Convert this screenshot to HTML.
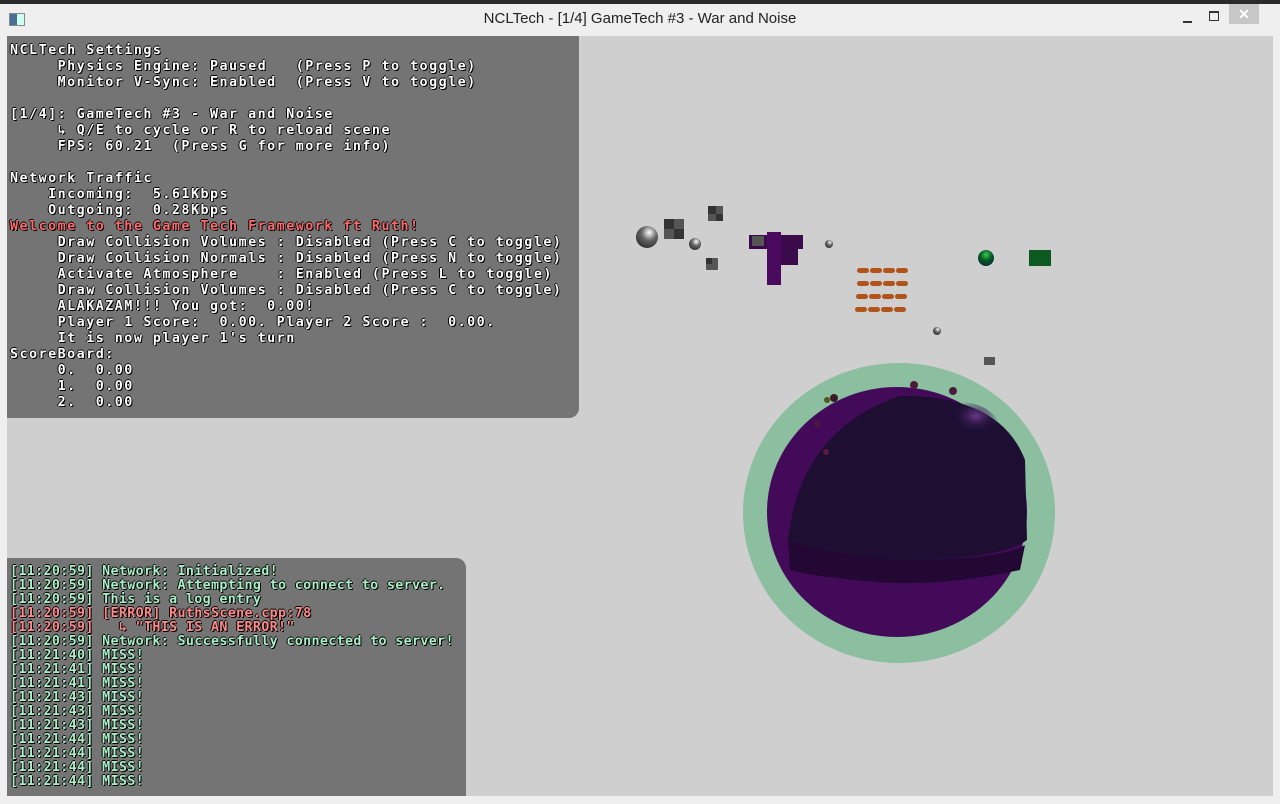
<!DOCTYPE html>
<html><head><meta charset="utf-8"><style>
html,body{margin:0;padding:0;width:1280px;height:804px;overflow:hidden;background:#cfcfcf;font-family:"Liberation Mono",monospace}
#top{position:absolute;left:0;top:0;width:1280px;height:4px;background:#2b2b2b}
#title{position:absolute;left:0;top:4px;width:1280px;height:32px;background:#efefef}
#title .t{position:absolute;left:0;width:1280px;top:6px;text-align:center;font:15px "Liberation Sans",sans-serif;color:#222}
#frameL{position:absolute;left:0;top:36px;width:7px;height:768px;background:#efefef}
#frameR{position:absolute;right:0;top:36px;width:7px;height:768px;background:#efefef}
#frameB{position:absolute;left:0;top:796px;width:1280px;height:8px;background:#efefef}
.p{position:absolute;background:#747474}
pre{margin:0;position:absolute;font-size:13.33px;font-weight:bold;color:#fff;text-shadow:1px 1px 0 #000,-1px 0 0 #000,0 -1px 0 #000}
.r{color:#ff6b6b}
.g{color:#a9f0c8}
.e{color:#ff8a8a}
</style></head><body>
<div id="top"></div>
<div id="title">
<div style="position:absolute;left:9px;top:9px;width:14px;height:11px;border:1px solid #888;background:linear-gradient(90deg,#4a6f90 50%,#cfe 50%)"></div>
<div class="t">NCLTech - [1/4] GameTech #3 - War and Noise</div>
<div style="position:absolute;left:1183px;top:17px;width:9px;height:2px;background:#333"></div>
<div style="position:absolute;left:1209px;top:7px;width:8px;height:7px;border:1px solid #333;border-top-width:2px"></div>
<div style="position:absolute;left:1229px;top:0;width:30px;height:20px;background:#c7c7c7;color:#fff;text-align:center;font:bold 14px 'Liberation Sans',sans-serif;line-height:20px">✕</div>
</div>
<div id="frameL"></div><div id="frameR"></div><div id="frameB"></div>

<svg style="position:absolute;left:0;top:0" width="1280" height="804">
<defs>
<radialGradient id="hl" cx="0.7" cy="0.25" r="0.3"><stop offset="0" stop-color="#6a3a8a"/><stop offset="1" stop-color="#1f0f35" stop-opacity="0"/></radialGradient>
<radialGradient id="gs" cx="0.6" cy="0.3" r="0.7"><stop offset="0" stop-color="#fff"/><stop offset="0.5" stop-color="#666"/><stop offset="1" stop-color="#333"/></radialGradient>
<radialGradient id="gg" cx="0.5" cy="0.3" r="0.7"><stop offset="0" stop-color="#3c5"/><stop offset="0.5" stop-color="#0a5a25"/><stop offset="1" stop-color="#033"/></radialGradient>
</defs>
<ellipse cx="899" cy="513" rx="156" ry="150" fill="#8bbfa0"/>
<ellipse cx="897" cy="512" rx="130" ry="125" fill="#430a5a"/>
<path d="M 788 540 Q 800 430 900 396 Q 1000 395 1025 460 L 1027 540 Q 1000 560 900 560 Q 830 555 788 540 Z" fill="#1d0e32"/>
<path d="M 788 540 Q 830 555 900 560 Q 1000 560 1025 545 L 1020 570 Q 950 585 890 583 Q 820 578 790 570 Z" fill="#220833"/>
<ellipse cx="960" cy="430" rx="40" ry="28" fill="url(#hl)"/>
<circle cx="827" cy="400" r="3" fill="#552"/><circle cx="914" cy="385" r="4" fill="#4a1c38"/><circle cx="953" cy="391" r="4" fill="#4a1c38"/><circle cx="817" cy="424" r="3" fill="#4a1c38"/><circle cx="826" cy="452" r="3" fill="#5a1c38"/><circle cx="834" cy="398" r="4" fill="#3a1c28"/>
<circle cx="647" cy="237" r="11" fill="url(#gs)"/>
<circle cx="695" cy="244" r="6" fill="url(#gs)"/>
<circle cx="829" cy="244" r="4" fill="url(#gs)"/>
<circle cx="937" cy="331" r="4" fill="url(#gs)"/>
<rect x="664" y="219" width="20" height="20" fill="#555"/><rect x="664" y="219" width="10" height="10" fill="#333"/><rect x="674" y="229" width="10" height="10" fill="#333"/>
<rect x="708" y="206" width="15" height="15" fill="#555"/><rect x="708" y="206" width="8" height="8" fill="#333"/><rect x="716" y="214" width="7" height="7" fill="#333"/>
<rect x="706" y="258" width="12" height="12" fill="#555"/><rect x="706" y="258" width="6" height="6" fill="#333"/>
<rect x="984" y="357" width="11" height="8" fill="#555"/>
<rect x="749" y="235" width="54" height="14" fill="#3a0a4a"/><rect x="767" y="232" width="14" height="53" fill="#4a0a5e"/><rect x="781" y="249" width="17" height="16" fill="#3a0a4a"/><rect x="752" y="236" width="12" height="10" fill="#555"/>
<circle cx="986" cy="258" r="8" fill="url(#gg)"/><rect x="1029" y="250" width="22" height="16" fill="#0c5a22"/>
<g fill="#b2541a">
<rect x="857" y="268" width="12" height="5" rx="2.5"/><rect x="870" y="268" width="12" height="5" rx="2.5"/><rect x="883" y="268" width="12" height="5" rx="2.5"/><rect x="896" y="268" width="12" height="5" rx="2.5"/>
<rect x="857" y="281" width="12" height="5" rx="2.5"/><rect x="870" y="281" width="12" height="5" rx="2.5"/><rect x="883" y="281" width="12" height="5" rx="2.5"/><rect x="896" y="281" width="12" height="5" rx="2.5"/>
<rect x="856" y="294" width="12" height="5" rx="2.5"/><rect x="869" y="294" width="12" height="5" rx="2.5"/><rect x="882" y="294" width="12" height="5" rx="2.5"/><rect x="895" y="294" width="12" height="5" rx="2.5"/>
<rect x="855" y="307" width="12" height="5" rx="2.5"/><rect x="868" y="307" width="12" height="5" rx="2.5"/><rect x="881" y="307" width="12" height="5" rx="2.5"/><rect x="894" y="307" width="12" height="5" rx="2.5"/>
</g>
</svg>

<div class="p" style="left:7px;top:36px;width:572px;height:382px;border-bottom-right-radius:10px"></div>
<pre style="left:10px;top:43px;line-height:16px;letter-spacing:1.5px">NCLTech Settings
     Physics Engine: Paused   (Press P to toggle)
     Monitor V-Sync: Enabled  (Press V to toggle)

[1/4]: GameTech #3 - War and Noise
     ↳ Q/E to cycle or R to reload scene
     FPS: 60.21  (Press G for more info)

Network Traffic
    Incoming:  5.61Kbps
    Outgoing:  0.28Kbps
<span class="r">Welcome to the Game Tech Framework ft Ruth!</span>
     Draw Collision Volumes : Disabled (Press C to toggle)
     Draw Collision Normals : Disabled (Press N to toggle)
     Activate Atmosphere    : Enabled (Press L to toggle)
     Draw Collision Volumes : Disabled (Press C to toggle)
     ALAKAZAM!!! You got:  0.00!
     Player 1 Score:  0.00. Player 2 Score :  0.00.
     It is now player 1's turn
ScoreBoard:
     0.  0.00
     1.  0.00
     2.  0.00</pre>

<div class="p" style="left:7px;top:558px;width:459px;height:238px;border-top-right-radius:10px"></div>
<pre class="g" style="left:10px;top:565px;line-height:14px;letter-spacing:0.35px">[11:20:59] Network: Initialized!
[11:20:59] Network: Attempting to connect to server.
[11:20:59] This is a log entry
<span class="e">[11:20:59] [ERROR] RuthsScene.cpp:78
[11:20:59]   ↳ "THIS IS AN ERROR!"</span>
[11:20:59] Network: Successfully connected to server!
[11:21:40] MISS!
[11:21:41] MISS!
[11:21:41] MISS!
[11:21:43] MISS!
[11:21:43] MISS!
[11:21:43] MISS!
[11:21:44] MISS!
[11:21:44] MISS!
[11:21:44] MISS!
[11:21:44] MISS!</pre>
</body></html>
